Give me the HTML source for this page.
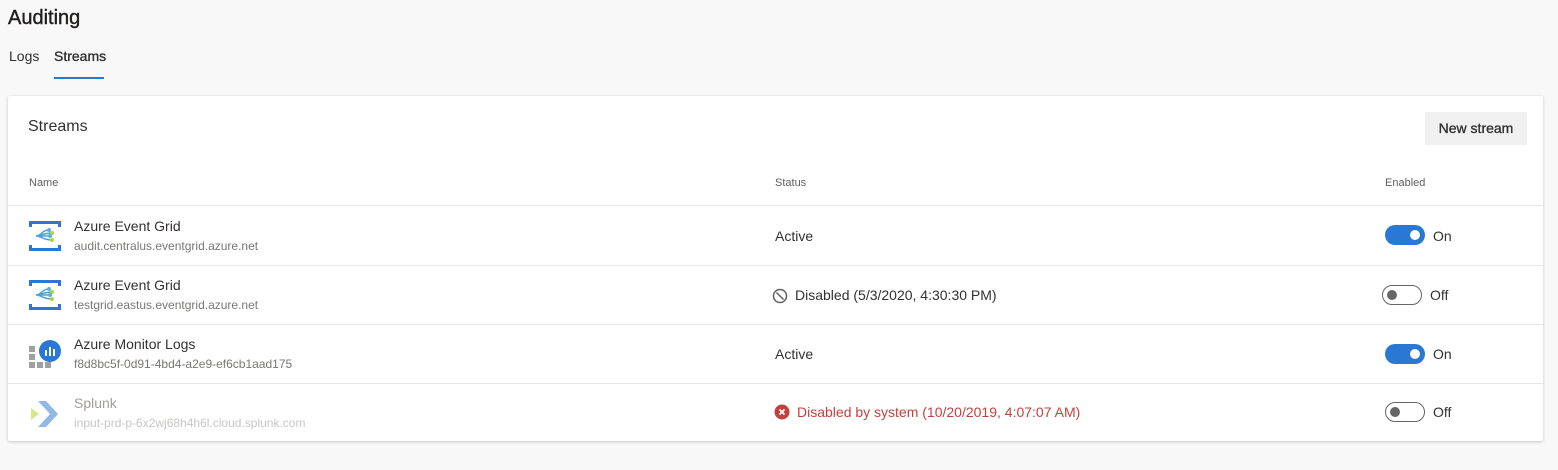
<!DOCTYPE html>
<html><head><style>
*{margin:0;padding:0;box-sizing:border-box}
body{width:1558px;height:470px;background:#f8f8f8;font-family:"Segoe UI","Liberation Sans",sans-serif;color:#323130;position:relative;overflow:hidden}
.a{position:absolute;white-space:nowrap}
.card{position:absolute;left:8px;top:96px;width:1535px;height:345px;background:#fff;border-radius:2px;box-shadow:0 1px 3px rgba(0,0,0,.18),0 0 1px rgba(0,0,0,.1)}
.line{position:absolute;left:0;width:1535px;height:1px;background:#e6e6e6}
.tog{position:absolute;width:40px;height:20px;border-radius:10px}
.on{background:#2b78d4}
.on::after{content:"";position:absolute;right:5px;top:5px;width:10px;height:10px;border-radius:50%;background:#fff}
.off{border:1px solid #666;background:#fff}
.off::after{content:"";position:absolute;left:4px;top:4px;width:10px;height:10px;border-radius:50%;background:#666}
.t1{font-size:14px;color:#323130}
.t2{font-size:12px;color:#797775}
</style></head><body>
<div class="a" style="left:8px;top:7px;font-size:20px;color:#201f1e;-webkit-text-stroke:0.4px #201f1e">Auditing</div>
<div class="a" style="left:9px;top:48px;font-size:14px">Logs</div>
<div class="a" style="left:54px;top:48px;font-size:14px;-webkit-text-stroke:0.35px #323130">Streams</div>
<div class="a" style="left:54px;top:77px;width:50px;height:2px;background:#2b78d4"></div>
<div class="card">
<div class="a" style="left:20px;top:22px;font-size:16px">Streams</div>
<div class="a" style="left:1417px;top:16px;width:102px;height:33px;background:#f0f0f0;border-radius:2px;font-size:14px;text-align:center;line-height:33px;-webkit-text-stroke:0.35px #323130">New stream</div>
<div class="a" style="left:21px;top:81px;font-size:11px;color:#605e5c">Name</div>
<div class="a" style="left:767px;top:81px;font-size:11px;color:#605e5c">Status</div>
<div class="a" style="left:1377px;top:81px;font-size:11px;color:#605e5c">Enabled</div>
<div class="line" style="top:109px"></div>
<div class="line" style="top:169px"></div>
<div class="line" style="top:228px"></div>
<div class="line" style="top:287px"></div>

<!-- row1 -->
<svg class="a" style="left:20px;top:124px" width="34" height="34" viewBox="0 0 34 34"><path d="M1 1h32v3H1zM1 1h3v6H1zM30 1h3v6h-3zM1 28h32v3H1zM1 25h3v6H1zM30 25h3v6h-3z" fill="#2b78d4"/><g stroke="#4aa2d8" stroke-width="1.4" fill="none"><path d="M8 16C13 16 14 10 21 10M8 16C13 16 15 13 24 13M8 16H22M8 16C13 16 15 20 24 20"/></g><circle cx="21" cy="10" r="2" fill="#5ab0e0"/><circle cx="24" cy="13" r="2" fill="#b4d334"/><circle cx="22" cy="16" r="2" fill="#5ab0e0"/><circle cx="24" cy="20" r="2" fill="#b4d334"/></svg>
<div class="a t1" style="left:66px;top:122px">Azure Event Grid</div>
<div class="a t2" style="left:66px;top:143px">audit.centralus.eventgrid.azure.net</div>
<div class="a t1" style="left:767px;top:132px">Active</div>
<div class="tog on" style="left:1377px;top:129px"></div>
<div class="a t1" style="left:1425px;top:132px">On</div>

<!-- row2 -->
<svg class="a" style="left:20px;top:183px" width="34" height="34" viewBox="0 0 34 34"><path d="M1 1h32v3H1zM1 1h3v6H1zM30 1h3v6h-3zM1 28h32v3H1zM1 25h3v6H1zM30 25h3v6h-3z" fill="#2b78d4"/><g stroke="#4aa2d8" stroke-width="1.4" fill="none"><path d="M8 16C13 16 14 10 21 10M8 16C13 16 15 13 24 13M8 16H22M8 16C13 16 15 20 24 20"/></g><circle cx="21" cy="10" r="2" fill="#5ab0e0"/><circle cx="24" cy="13" r="2" fill="#b4d334"/><circle cx="22" cy="16" r="2" fill="#5ab0e0"/><circle cx="24" cy="20" r="2" fill="#b4d334"/></svg>
<div class="a t1" style="left:66px;top:181px">Azure Event Grid</div>
<div class="a t2" style="left:66px;top:202px">testgrid.eastus.eventgrid.azure.net</div>
<svg class="a" style="left:764px;top:192px" width="16" height="16" viewBox="0 0 16 16"><circle cx="8" cy="8" r="6.5" fill="none" stroke="#605e5c" stroke-width="1.5"/><path d="M4.5 4.5L11.5 11.5" stroke="#605e5c" stroke-width="1.5"/></svg>
<div class="a t1" style="left:787px;top:191px">Disabled (5/3/2020, 4:30:30 PM)</div>
<div class="tog off" style="left:1374px;top:189px"></div>
<div class="a t1" style="left:1422px;top:191px">Off</div>

<!-- row3 -->
<svg class="a" style="left:20px;top:243px" width="34" height="32" viewBox="0 0 34 32"><g fill="#a0a0a0"><rect x="1" y="7" width="6" height="6"/><rect x="1" y="15" width="6" height="6"/><rect x="1" y="23" width="6" height="6"/><rect x="9" y="23" width="6" height="6"/><rect x="17" y="23" width="6" height="6"/></g><circle cx="22" cy="12" r="11" fill="#2b78d4"/><g fill="#fff"><rect x="17" y="11" width="2" height="6"/><rect x="21" y="8" width="2" height="9"/><rect x="25" y="10" width="2" height="7"/></g></svg>
<div class="a t1" style="left:66px;top:240px">Azure Monitor Logs</div>
<div class="a t2" style="left:66px;top:261px">f8d8bc5f-0d91-4bd4-a2e9-ef6cb1aad175</div>
<div class="a t1" style="left:767px;top:250px">Active</div>
<div class="tog on" style="left:1377px;top:248px"></div>
<div class="a t1" style="left:1425px;top:250px">On</div>

<!-- row4 -->
<svg class="a" style="left:20px;top:303px" width="34" height="30" viewBox="0 0 34 30"><path d="M3 9l8 6-8 6z" fill="#d6e88a"/><path d="M10 2h8l12 13-12 13h-8l12-13z" fill="#92b8e6"/></svg>
<div class="a t1" style="left:66px;top:299px;color:#a19f9d">Splunk</div>
<div class="a t2" style="left:66px;top:320px;color:#c8c6c4">input-prd-p-6x2wj68h4h6l.cloud.splunk.com</div>
<svg class="a" style="left:766px;top:308px" width="16" height="16" viewBox="0 0 16 16"><circle cx="8" cy="8" r="7.5" fill="#c4413d"/><path d="M5.5 5.5l5 5M10.5 5.5l-5 5" stroke="#fff" stroke-width="1.8"/></svg>
<div class="a t1" style="left:789px;top:308px;color:#c4413d">Disabled by system (10/20/2019, 4:07:07 AM)</div>
<div class="tog off" style="left:1377px;top:306px"></div>
<div class="a t1" style="left:1425px;top:308px">Off</div>
</div>
</body></html>
